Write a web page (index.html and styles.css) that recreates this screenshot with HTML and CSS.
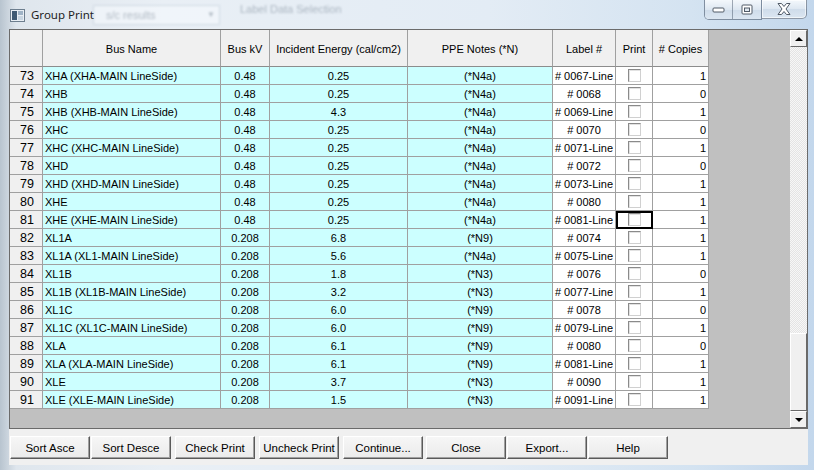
FILE: index.html
```html
<!DOCTYPE html>
<html lang="en">
<head>
    <meta charset="UTF-8">
    <title>Group Print</title>
    <link rel="stylesheet" href="styles.css">
</head>
<body>
    <div class="window">
        <div class="titlebar">
            <!-- blurred window behind the glass -->
            <div class="behind behind-field"><span>s/c results</span><span class="behind-arrow">&#9660;</span></div>
            <div class="behind behind-text">Label Data Selection</div>

            <svg class="title-icon" width="15" height="13" viewBox="0 0 15 13">
                <rect x="0.5" y="0.5" width="14" height="12" fill="#e8eef4" stroke="#6d7e8e"/>
                <rect x="2" y="2" width="5" height="9" fill="#3f5a74"/>
                <rect x="8" y="2" width="5" height="4" fill="#9fb3c6"/>
                <rect x="8" y="7" width="5" height="4" fill="#c9d6e2"/>
            </svg>
            <span class="title">Group Print</span>

            <div class="caption-buttons">
                <div class="cap-group">
                    <div class="cap-btn cap-min">
                        <svg width="13" height="6" viewBox="0 0 13 6"><rect x="1" y="1" width="11" height="4" rx="1" fill="#fff" stroke="#505a66"/></svg>
                    </div>
                    <div class="cap-btn cap-max">
                        <svg width="12" height="11" viewBox="0 0 12 11"><rect x="1" y="1" width="10" height="9" rx="1" fill="#fff" stroke="#505a66"/><rect x="3.5" y="4" width="5" height="3.5" fill="#dfe7ef" stroke="#505a66"/></svg>
                    </div>
                </div>
                <div class="cap-btn cap-close">
                    <svg width="16" height="14" viewBox="0 0 16 14"><path d="M2 1.5 L5.5 1.5 L8 4.5 L10.5 1.5 L14 1.5 L10 7 L14 12.5 L10.5 12.5 L8 9.5 L5.5 12.5 L2 12.5 L6 7 Z" fill="#fff" stroke="#505a66" stroke-linejoin="round"/></svg>
                </div>
            </div>
        </div>

        <div class="frame-body">
            <div class="client">
                <div class="grid-box">
                    <div class="grid-area">
                        <table class="grid">
                            <colgroup>
                                <col style="width:33px">
                                <col style="width:178px">
                                <col style="width:49px">
                                <col style="width:138px">
                                <col style="width:145px">
                                <col style="width:63px">
                                <col style="width:37px">
                                <col style="width:56px">
                            </colgroup>
                            <thead>
                                <tr>
                                    <th></th>
                                    <th>Bus Name</th>
                                    <th>Bus kV</th>
                                    <th>Incident Energy (cal/cm2)</th>
                                    <th>PPE Notes (*N)</th>
                                    <th>Label #</th>
                                    <th>Print</th>
                                    <th># Copies</th>
                                </tr>
                            </thead>
                            <tbody id="rows"></tbody>
                        </table>
                    </div>
                    <div class="vscroll">
                        <div class="sb-btn"><span class="arrow-up"></span></div>
                        <div class="sb-track">
                            <div class="sb-thumb"></div>
                        </div>
                        <div class="sb-btn"><span class="arrow-down"></span></div>
                    </div>
                </div>

                <div class="button-bar">
                    <button class="btn">Sort Asce</button>
                    <button class="btn">Sort Desce</button>
                    <button class="btn">Check Print</button>
                    <button class="btn">Uncheck Print</button>
                    <button class="btn">Continue...</button>
                    <button class="btn">Close</button>
                    <button class="btn">Export...</button>
                    <button class="btn">Help</button>
                </div>
            </div>
        </div>
    </div>

    <script>
        // row, bus name, kV, incident energy, PPE note, label, copies
        const data = [
            [73, 'XHA (XHA-MAIN LineSide)', '0.48', '0.25', '(*N4a)', '# 0067-Line', 1],
            [74, 'XHB', '0.48', '0.25', '(*N4a)', '# 0068', 0],
            [75, 'XHB (XHB-MAIN LineSide)', '0.48', '4.3', '(*N4a)', '# 0069-Line', 1],
            [76, 'XHC', '0.48', '0.25', '(*N4a)', '# 0070', 0],
            [77, 'XHC (XHC-MAIN LineSide)', '0.48', '0.25', '(*N4a)', '# 0071-Line', 1],
            [78, 'XHD', '0.48', '0.25', '(*N4a)', '# 0072', 0],
            [79, 'XHD (XHD-MAIN LineSide)', '0.48', '0.25', '(*N4a)', '# 0073-Line', 1],
            [80, 'XHE', '0.48', '0.25', '(*N4a)', '# 0080', 1],
            [81, 'XHE (XHE-MAIN LineSide)', '0.48', '0.25', '(*N4a)', '# 0081-Line', 1],
            [82, 'XL1A', '0.208', '6.8', '(*N9)', '# 0074', 1],
            [83, 'XL1A (XL1-MAIN LineSide)', '0.208', '5.6', '(*N4a)', '# 0075-Line', 1],
            [84, 'XL1B', '0.208', '1.8', '(*N3)', '# 0076', 0],
            [85, 'XL1B (XL1B-MAIN LineSide)', '0.208', '3.2', '(*N3)', '# 0077-Line', 1],
            [86, 'XL1C', '0.208', '6.0', '(*N9)', '# 0078', 0],
            [87, 'XL1C (XL1C-MAIN LineSide)', '0.208', '6.0', '(*N9)', '# 0079-Line', 1],
            [88, 'XLA', '0.208', '6.1', '(*N9)', '# 0080', 0],
            [89, 'XLA (XLA-MAIN LineSide)', '0.208', '6.1', '(*N9)', '# 0081-Line', 1],
            [90, 'XLE', '0.208', '3.7', '(*N3)', '# 0090', 1],
            [91, 'XLE (XLE-MAIN LineSide)', '0.208', '1.5', '(*N3)', '# 0091-Line', 1]
        ];

        const tbody = document.getElementById('rows');
        data.forEach(function(r) {
            const tr = document.createElement('tr');
            const focus = r[0] === 81 ? ' focused' : '';
            tr.innerHTML =
                '<td class="num">' + r[0] + '</td>' +
                '<td class="cyan left">' + r[1] + '</td>' +
                '<td class="cyan">' + r[2] + '</td>' +
                '<td class="cyan">' + r[3] + '</td>' +
                '<td class="cyan">' + r[4] + '</td>' +
                '<td class="white label">' + r[5] + '</td>' +
                '<td class="white check' + focus + '"><span class="box"></span></td>' +
                '<td class="white right">' + r[6] + '</td>';
            tbody.appendChild(tr);
        });
    </script>
</body>
</html>
```

FILE: styles.css
```css
* {
    margin: 0;
    padding: 0;
    box-sizing: border-box;
}

body {
    width: 814px;
    height: 470px;
    overflow: hidden;
    font-family: 'Liberation Sans', Arial, sans-serif;
    font-size: 11px;
    color: #000;
    background: #c9d9e9;
}

.window {
    height: 470px;
    display: flex;
    flex-direction: column;
    background: linear-gradient(90deg, #b8c4cf 0%, #dfe6ed 2%, #e9eff5 20%, #e3ecf5 60%, #d4e3f1 85%, #c3d7ec 100%);
}

/* title bar */

.titlebar {
    height: 29px;
    display: flex;
    align-items: flex-start;
    position: relative;
    flex-shrink: 0;
}

.behind {
    position: absolute;
    filter: blur(1.2px);
    opacity: 0.5;
}

.behind-field {
    left: 93px;
    top: 5px;
    width: 127px;
    height: 20px;
    background: #f8fbff;
    border: 1px solid #b9c6d3;
    color: #7d8a97;
    font-size: 11px;
    padding: 3px 0 0 12px;
}

.behind-arrow {
    position: absolute;
    right: 4px;
    top: 4px;
    font-size: 8px;
}

.behind-text {
    left: 240px;
    top: 3px;
    color: #6f7d8c;
    font-size: 11px;
}

.title-icon {
    margin: 9px 0 0 10px;
    position: relative;
}

.title {
    font-family: 'Noto Sans', 'Open Sans', sans-serif;
    font-size: 11.5px;
    color: #1e1e1e;
    margin: 7px 0 0 6px;
    position: relative;
}

.caption-buttons {
    margin-left: auto;
    margin-right: 7px;
    display: flex;
    position: relative;
}

.cap-group {
    display: flex;
    border: 1px solid rgba(60, 75, 95, 0.55);
    border-top: none;
    border-radius: 0 0 0 5px;
    overflow: hidden;
    box-shadow: inset 0 0 0 1px rgba(255, 255, 255, 0.6);
}

.cap-btn {
    height: 19px;
    display: flex;
    align-items: center;
    justify-content: center;
    background: linear-gradient(#f4f8fc, #dde7f1 50%, #cfdcea 51%, #dbe6f1);
}

.cap-min {
    width: 28px;
    border-right: 1px solid rgba(60, 75, 95, 0.45);
}

.cap-max {
    width: 28px;
}

.cap-close {
    width: 45px;
    border: 1px solid rgba(60, 75, 95, 0.55);
    border-left: none;
    border-top: none;
    border-radius: 0 0 5px 0;
    box-shadow: inset 0 0 0 1px rgba(255, 255, 255, 0.6);
}

/* client area */

.frame-body {
    flex: 1;
    display: flex;
    padding: 0 6px 5px 9px;
}

.client {
    flex: 1;
    background: #f0f0f0;
    display: flex;
    flex-direction: column;
}

.grid-box {
    height: 400px;
    border: 1px solid #6b6b6b;
    display: flex;
}

.grid-area {
    flex: 1;
    background: #c0c0c0;
    overflow: hidden;
}

.grid {
    border-collapse: separate;
    border-spacing: 0;
    table-layout: fixed;
    width: 699px;
}

.grid th,
.grid td {
    border-right: 1px solid #a0a0a0;
    border-bottom: 1px solid #a0a0a0;
    white-space: nowrap;
    overflow: hidden;
    text-align: center;
    vertical-align: middle;
    font-weight: normal;
}

.grid th {
    height: 37px;
    padding-top: 1px;
    background: #f0f0f0;
    border-bottom-color: #8c8c8c;
}

.grid td {
    height: 18px;
    padding: 0 3px;
}

.grid td.num {
    background: #f0f0f0;
    text-align: right;
    padding-right: 8px;
    font-size: 12.5px;
}

.grid td.cyan {
    background: #ccffff;
}

.grid td.white {
    background: #fff;
}

.grid td.left {
    text-align: left;
    padding-left: 2px;
}

.grid td.label {
    padding: 0 1px;
}

.grid td.right {
    text-align: right;
    padding-right: 2px;
}

.grid td.check {
    padding: 0;
}

.box {
    display: inline-block;
    width: 13px;
    height: 13px;
    vertical-align: middle;
    background: #fff;
    border: 1px solid;
    border-color: #8a8a8a #d0d0d0 #d0d0d0 #8a8a8a;
    box-shadow: inset 1px 1px 0 #e2e2e2;
}

.grid td.focused {
    outline: 2px solid #000;
    outline-offset: -2px;
}

/* scrollbar */

.vscroll {
    width: 17px;
    display: flex;
    flex-direction: column;
}

.sb-btn {
    height: 17px;
    background: #f0f0f0;
    border: 1px solid;
    border-color: #fff #696969 #696969 #fff;
    display: flex;
    align-items: center;
    justify-content: center;
}

.arrow-up {
    width: 0;
    height: 0;
    border-left: 4px solid transparent;
    border-right: 4px solid transparent;
    border-bottom: 4px solid #000;
}

.arrow-down {
    width: 0;
    height: 0;
    border-left: 4px solid transparent;
    border-right: 4px solid transparent;
    border-top: 4px solid #000;
}

.sb-track {
    flex: 1;
    display: flex;
    flex-direction: column;
    justify-content: flex-end;
    background: repeating-conic-gradient(#f7f7f7 0% 25%, #e4e4e4 0% 50%) 0 0 / 2px 2px;
}

.sb-thumb {
    height: 78px;
    background: #f0f0f0;
    border: 1px solid;
    border-color: #fff #696969 #696969 #fff;
}

/* buttons */

.button-bar {
    flex: 1;
    display: flex;
    padding: 7px 0 0 1px;
}

.btn {
    width: 80px;
    height: 23px;
    margin-left: 4px;
    font-family: inherit;
    font-size: 11.5px;
    color: #000;
    background: linear-gradient(#f6f6f6, #ebebeb);
    border: 1px solid;
    border-color: #fff #5a5a5a #5a5a5a #fff;
    box-shadow: inset -1px -1px 0 #a0a0a0;
}

.btn:first-child {
    margin-left: 0;
}

.btn:nth-child(2),
.btn:nth-child(7),
.btn:nth-child(8) {
    margin-left: 1px;
}

.btn:nth-child(6) {
    margin-left: 3px;
}
```
